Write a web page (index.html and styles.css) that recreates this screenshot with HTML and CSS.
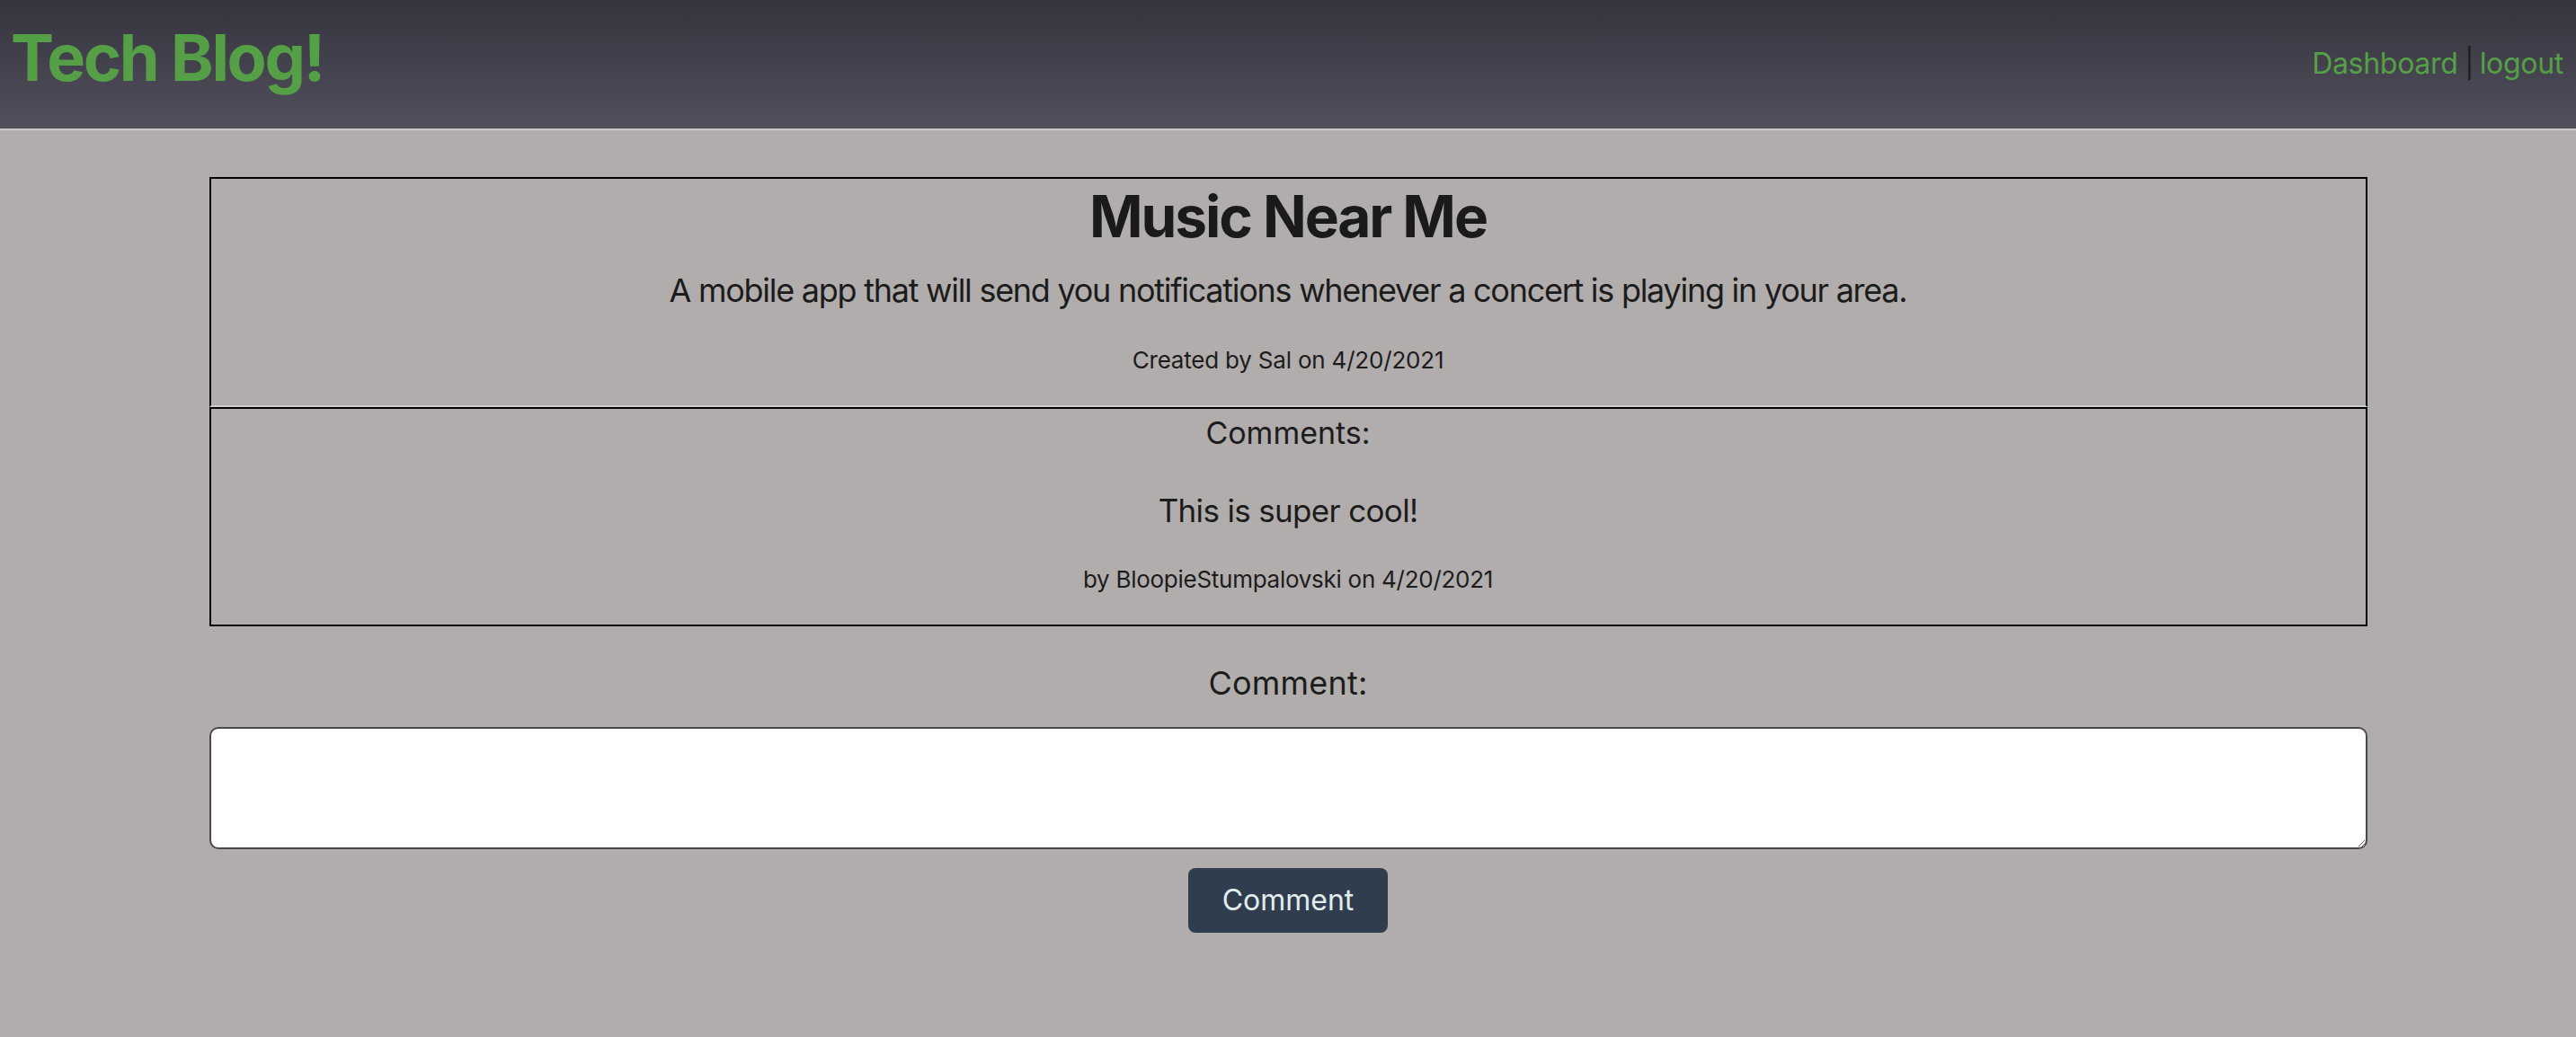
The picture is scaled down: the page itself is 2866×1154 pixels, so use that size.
FILE: index.html
```html
<!DOCTYPE html>
<html lang="en">
<head>
<meta charset="utf-8">
<title>Tech Blog!</title>
<link rel="stylesheet" href="styles.css">
</head>
<body>
<header class="site-header">
  <h1 class="logo">Tech Blog!</h1>
  <nav class="nav">
    <a class="nav-link" href="#">Dashboard</a><span class="nav-sep"> | </span><a class="nav-link" href="#">logout</a>
  </nav>
</header>
<main class="container">
  <section class="post">
    <h2 class="post-title">Music Near Me</h2>
    <p class="post-body">A mobile app that will send you notifications whenever a concert is playing in your area.</p>
    <p class="meta">Created by Sal on 4/20/2021</p>
  </section>
  <section class="comments">
    <h3 class="comments-title">Comments:</h3>
    <p class="comment-text">This is super cool!</p>
    <p class="meta meta-by">by BloopieStumpalovski on 4/20/2021</p>
  </section>
  <form class="comment-form">
    <label class="comment-label" for="comment">Comment:</label>
    <textarea class="comment-input" id="comment"></textarea>
    <button class="comment-btn" type="button">Comment</button>
  </form>
</main>
</body>
</html>
```
FILE: styles.css
```css
* { box-sizing: border-box; }
html, body { margin: 0; padding: 0; }
body {
  background: #b1adac;
  font-family: Inter, "Noto Sans", "Liberation Sans", sans-serif;
  color: #1c1c1c;
  min-height: 1154px;
}
.site-header {
  height: 145px;
  background: linear-gradient(to bottom, #35333e 0%, #52505c 100%);
  border-bottom: 2px solid #cbc8c7;
  display: flex;
  justify-content: space-between;
  align-items: flex-start;
  padding: 20px 14px 0 12px;
}
.logo {
  margin: 0;
  font-size: 72px;
  line-height: 88px;
  font-weight: 700;
  color: #55a046;
  letter-spacing: -2.3px;
}
.nav {
  margin-top: 31px;
  font-size: 32px;
  line-height: 40px;
  letter-spacing: -0.3px;
}
.nav-link { color: #55a046; text-decoration: none; }
.nav-sep { color: #1f1f1f; letter-spacing: -1.5px; }
.container {
  width: 2401px;
  margin: 52px auto 0;
  text-align: center;
}
.post {
  border: 2px solid #000;
  border-bottom: 2px solid #d2cecd;
  padding: 4px 20px 34px;
}
.post-title {
  margin: 0;
  font-size: 64px;
  line-height: 76px;
  font-weight: 700;
  color: #1a1a1a;
  letter-spacing: -2.1px;
}
.post-body {
  margin: 22px 0 0;
  font-size: 36px;
  line-height: 44px;
  letter-spacing: -1.27px;
}
.meta {
  margin: 40px 0 0;
  font-size: 26px;
  line-height: 32px;
  letter-spacing: -0.2px;
}
.comments {
  border: 2px solid #000;
  padding: 7px 20px 34px;
}
.comments-title {
  margin: 0;
  font-size: 34px;
  line-height: 40px;
  font-weight: 400;
}
.comment-text {
  margin: 45px 0 0;
  font-size: 35px;
  line-height: 42px;
  letter-spacing: -0.67px;
}
.comments .meta-by { margin-top: 40px; letter-spacing: -0.27px; }
.comment-form {
  display: flex;
  flex-direction: column;
  align-items: center;
  padding-top: 41px;
}
.comment-label {
  font-size: 36px;
  line-height: 44px;
  letter-spacing: 0.2px;
}
.comment-input {
  display: block;
  margin-top: 27px;
  width: 100%;
  height: 136px;
  border: 2px solid #4a4848;
  border-radius: 10px;
  background: #fff;
  font-family: inherit;
  font-size: 28px;
  padding: 8px;
  resize: both;
}
.comment-btn {
  margin-top: 21px;
  width: 222px;
  height: 72px;
  border: none;
  border-radius: 8px;
  background: #2f3d4e;
  color: #e2eeed;
  font-family: Inter, "Noto Sans", "Liberation Sans", sans-serif;
  font-size: 32px;
  line-height: 40px;
  cursor: pointer;
}
```
